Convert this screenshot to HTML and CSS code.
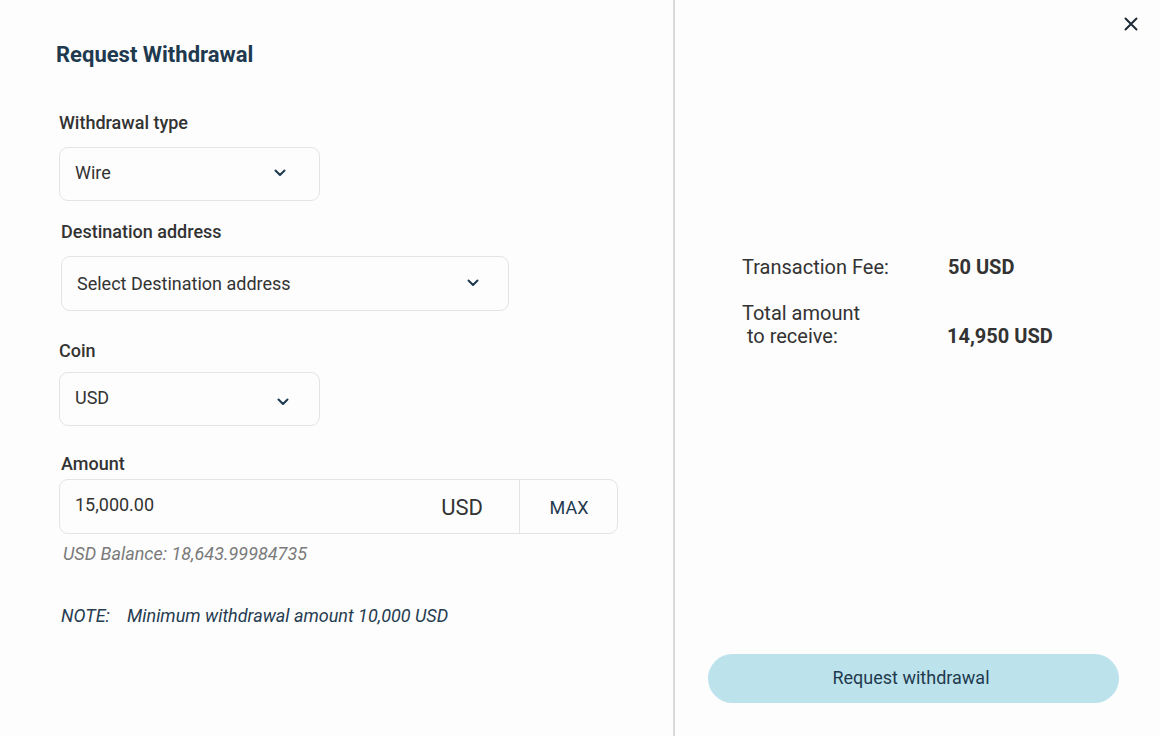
FILE: index.html
```html
<!DOCTYPE html>
<html lang="en">
<head>
<meta charset="utf-8">
<title>Request Withdrawal</title>
<link rel="stylesheet" href="styles.css">
</head>
<body>
<div class="modal">
  <section class="form-pane">
    <h1 class="title">Request Withdrawal</h1>

    <div class="field field-type">
      <div class="label">Withdrawal type</div>
      <div class="select w-short">
        <span>Wire</span>
        <svg class="chev" width="12" height="8" viewBox="0 0 12 8"><path d="M1.5 1.5 L6 6 L10.5 1.5" fill="none" stroke="#1e3a4f" stroke-width="2" stroke-linecap="round" stroke-linejoin="round"/></svg>
      </div>
    </div>

    <div class="field field-dest">
      <div class="label">Destination address</div>
      <div class="select w-long">
        <span>Select Destination address</span>
        <svg class="chev" width="12" height="8" viewBox="0 0 12 8"><path d="M1.5 1.5 L6 6 L10.5 1.5" fill="none" stroke="#1e3a4f" stroke-width="2" stroke-linecap="round" stroke-linejoin="round"/></svg>
      </div>
    </div>

    <div class="field field-coin">
      <div class="label">Coin</div>
      <div class="select w-short coin-select">
        <span>USD</span>
        <svg class="chev chev-low" width="12" height="8" viewBox="0 0 12 8"><path d="M1.5 1.5 L6 6 L10.5 1.5" fill="none" stroke="#1e3a4f" stroke-width="2" stroke-linecap="round" stroke-linejoin="round"/></svg>
      </div>
    </div>

    <div class="field field-amount">
      <div class="label">Amount</div>
      <div class="amount-box">
        <span class="amount-value">15,000.00</span>
        <span class="amount-cur">USD</span>
        <span class="amount-max">MAX</span>
      </div>
    </div>

    <div class="balance">USD Balance: 18,643.99984735</div>

    <div class="note"><span class="note-tag">NOTE:</span>Minimum withdrawal amount 10,000 USD</div>
  </section>

  <section class="summary-pane">
    <button class="close" aria-label="Close">
      <svg width="14" height="14" viewBox="0 0 14 14"><path d="M1.5 1.5 L12.5 12.5 M12.5 1.5 L1.5 12.5" stroke="#1e2a36" stroke-width="2" stroke-linecap="round"/></svg>
    </button>

    <div class="summary">
      <div class="row">
        <div class="row-label">Transaction Fee:</div>
        <div class="row-value">50 USD</div>
      </div>
      <div class="row row-total">
        <div class="row-label">Total amount<br>&nbsp;to receive:</div>
        <div class="row-value">14,950 USD</div>
      </div>
    </div>

    <button class="submit">Request withdrawal</button>
  </section>
</div>
</body>
</html>
```

FILE: styles.css
```css
* { box-sizing: border-box; }

html, body {
  margin: 0;
  padding: 0;
  background: #fdfdfd;
  font-family: Roboto, "Liberation Sans", Arial, sans-serif;
  color: #333333;
}

.modal {
  display: flex;
  width: 1160px;
  height: 736px;
}

.form-pane {
  width: 675px;
  border-right: 2px solid #d9d9d9;
  padding: 42px 0 0 59px;
  display: flex;
  flex-direction: column;
  align-items: flex-start;
}

.title {
  margin: 0 0 0 -3px;
  font-size: 22px;
  line-height: 26px;
  font-weight: 700;
  color: #1f3a4f;
}

.field { display: flex; flex-direction: column; }
.field-type { margin-top: 44px; }
.field-dest { margin-top: 20px; margin-left: 2px; }
.field-coin { margin-top: 29px; }
.field-amount { margin-top: 27px; }

.label {
  font-size: 18px;
  line-height: 22px;
  font-weight: 500;
  color: #333333;
  margin-bottom: 13px;
}
.field-coin .label { margin-bottom: 10px; }
.field-amount .label { margin-left: 2px; margin-bottom: 4px; }

.select {
  height: 54px;
  border: 1px solid #e4e4e4;
  border-radius: 9px;
  background: #fdfdfd;
  display: flex;
  align-items: center;
  justify-content: space-between;
  padding: 0 33px 3px 15px;
  font-size: 18px;
  color: #333333;
}
.w-short { width: 261px; }
.w-long { width: 448px; height: 55px; padding-right: 29px; padding-bottom: 1px; }
.coin-select { padding-right: 30px; }
.chev { display: block; flex: none; }
.chev-low { margin-top: 9px; }

.amount-box {
  width: 559px;
  height: 55px;
  border: 1px solid #e4e4e4;
  border-radius: 9px;
  display: flex;
  align-items: center;
}
.amount-value {
  flex: 1;
  padding-left: 15px;
  padding-bottom: 4px;
  font-size: 18px;
  color: #333333;
}
.amount-cur {
  font-size: 22px;
  color: #333333;
  padding-right: 36px;
  padding-top: 1px;
}
.amount-max {
  align-self: stretch;
  width: 98px;
  border-left: 1px solid #e4e4e4;
  display: flex;
  align-items: center;
  justify-content: center;
  font-size: 18px;
  color: #1f3a4f;
  padding-top: 2px;
  padding-left: 1px;
}

.balance {
  margin: 9px 0 0 4px;
  font-size: 18px;
  line-height: 22px;
  font-style: italic;
  color: #7a7a7a;
}

.note {
  margin: 40px 0 0 2px;
  font-size: 18px;
  line-height: 22px;
  font-style: italic;
  color: #263c50;
}
.note-tag { display: inline-block; width: 66px; }

.summary-pane {
  flex: 1;
  position: relative;
  display: flex;
  flex-direction: column;
  padding: 256px 41px 33px 33px;
}

.close {
  position: absolute;
  top: 17px;
  right: 22px;
  width: 14px;
  height: 14px;
  padding: 0;
  border: 0;
  background: none;
  cursor: pointer;
}
.close svg { display: block; }

.summary { padding-left: 34px; }
.row {
  display: flex;
  align-items: flex-end;
  font-size: 20px;
  line-height: 23px;
  color: #333333;
}
.row-label { width: 206px; }
.row-value { font-weight: 700; }
.row-total { margin-top: 23px; }
.row-total .row-value { margin-left: -1px; }

.submit {
  margin-top: auto;
  height: 49px;
  width: 411px;
  border: 0;
  border-radius: 25px;
  background: #bce3ec;
  color: #1f3a4f;
  font-family: Roboto, "Liberation Sans", Arial, sans-serif;
  font-size: 18px;
  padding: 0 5px 2px 0;
  cursor: pointer;
}
```
